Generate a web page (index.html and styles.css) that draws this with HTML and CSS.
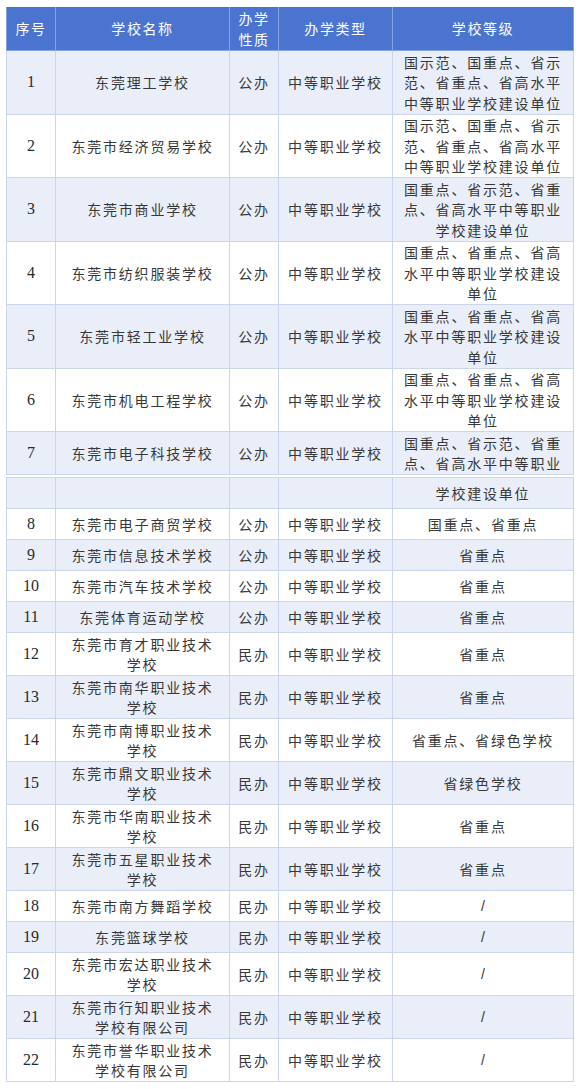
FILE: index.html
```html
<!DOCTYPE html>
<html lang="zh-CN">
<head>
<meta charset="utf-8">
<title>东莞市中等职业学校</title>
<link rel="stylesheet" href="styles.css">
</head>
<body>
<div class="sheet">
  <table class="grid">
    <colgroup>
      <col class="c-no"><col class="c-name"><col class="c-nat"><col class="c-type"><col class="c-lvl">
    </colgroup>
    <thead>
      <tr class="head">
        <th>序号</th><th>学校名称</th><th>办学性质</th><th>办学类型</th><th>学校等级</th>
      </tr>
    </thead>
    <tbody>
      <tr class="alt r3"><td class="no">1</td><td>东莞理工学校</td><td>公办</td><td>中等职业学校</td><td>国示范、国重点、省示范、省重点、省高水平中等职业学校建设单位</td></tr>
      <tr class="r3"><td class="no">2</td><td>东莞市经济贸易学校</td><td>公办</td><td>中等职业学校</td><td>国示范、国重点、省示范、省重点、省高水平中等职业学校建设单位</td></tr>
      <tr class="alt r3"><td class="no">3</td><td>东莞市商业学校</td><td>公办</td><td>中等职业学校</td><td>国重点、省示范、省重点、省高水平中等职业学校建设单位</td></tr>
      <tr class="r3"><td class="no">4</td><td>东莞市纺织服装学校</td><td>公办</td><td>中等职业学校</td><td>国重点、省重点、省高水平中等职业学校建设单位</td></tr>
      <tr class="alt r3"><td class="no">5</td><td>东莞市轻工业学校</td><td>公办</td><td>中等职业学校</td><td>国重点、省重点、省高水平中等职业学校建设单位</td></tr>
      <tr class="r3"><td class="no">6</td><td>东莞市机电工程学校</td><td>公办</td><td>中等职业学校</td><td>国重点、省重点、省高水平中等职业学校建设单位</td></tr>
      <tr class="alt r2"><td class="no">7</td><td>东莞市电子科技学校</td><td>公办</td><td>中等职业学校</td><td>国重点、省示范、省重点、省高水平中等职业</td></tr>
    </tbody>
  </table>
  <table class="grid">
    <colgroup>
      <col class="c-no"><col class="c-name"><col class="c-nat"><col class="c-type"><col class="c-lvl">
    </colgroup>
    <tbody>
      <tr class="alt r1"><td class="no"></td><td></td><td></td><td></td><td>学校建设单位</td></tr>
      <tr class="r1"><td class="no">8</td><td>东莞市电子商贸学校</td><td>公办</td><td>中等职业学校</td><td>国重点、省重点</td></tr>
      <tr class="alt r1"><td class="no">9</td><td>东莞市信息技术学校</td><td>公办</td><td>中等职业学校</td><td>省重点</td></tr>
      <tr class="r1"><td class="no">10</td><td>东莞市汽车技术学校</td><td>公办</td><td>中等职业学校</td><td>省重点</td></tr>
      <tr class="alt r1"><td class="no">11</td><td>东莞体育运动学校</td><td>公办</td><td>中等职业学校</td><td>省重点</td></tr>
      <tr class="r2"><td class="no">12</td><td>东莞市育才职业技术学校</td><td>民办</td><td>中等职业学校</td><td>省重点</td></tr>
      <tr class="alt r2"><td class="no">13</td><td>东莞市南华职业技术学校</td><td>民办</td><td>中等职业学校</td><td>省重点</td></tr>
      <tr class="r2"><td class="no">14</td><td>东莞市南博职业技术学校</td><td>民办</td><td>中等职业学校</td><td>省重点、省绿色学校</td></tr>
      <tr class="alt r2"><td class="no">15</td><td>东莞市鼎文职业技术学校</td><td>民办</td><td>中等职业学校</td><td>省绿色学校</td></tr>
      <tr class="r2"><td class="no">16</td><td>东莞市华南职业技术学校</td><td>民办</td><td>中等职业学校</td><td>省重点</td></tr>
      <tr class="alt r2"><td class="no">17</td><td>东莞市五星职业技术学校</td><td>民办</td><td>中等职业学校</td><td>省重点</td></tr>
      <tr class="r1"><td class="no">18</td><td>东莞市南方舞蹈学校</td><td>民办</td><td>中等职业学校</td><td class="slash">/</td></tr>
      <tr class="alt r1"><td class="no">19</td><td>东莞篮球学校</td><td>民办</td><td>中等职业学校</td><td class="slash">/</td></tr>
      <tr class="r2"><td class="no">20</td><td>东莞市宏达职业技术学校</td><td>民办</td><td>中等职业学校</td><td class="slash">/</td></tr>
      <tr class="alt r2"><td class="no">21</td><td>东莞市行知职业技术学校有限公司</td><td>民办</td><td>中等职业学校</td><td class="slash">/</td></tr>
      <tr class="r2"><td class="no">22</td><td>东莞市誉华职业技术学校有限公司</td><td>民办</td><td>中等职业学校</td><td class="slash">/</td></tr>
    </tbody>
  </table>
</div>
</body>
</html>
```

FILE: styles.css
```css
html, body {
  margin: 0;
  padding: 0;
  background: #ffffff;
}

body {
  font-family: "Noto Sans CJK SC", "Noto Sans", sans-serif;
  color: #3a3a3a;
}

.sheet {
  display: flex;
  flex-direction: column;
  gap: 2px;
  padding: 7px 0 0 6px;
  width: 567px;
}

.grid {
  width: 567px;
  table-layout: fixed;
  border-collapse: collapse;
  border-left: 1px solid #a9bbe0;
  border-right: 1px solid #a9bbe0;
  border-bottom: 1px solid #c3cfe8;
}

.c-no { width: 49px; }
.c-name { width: 174px; }
.c-nat { width: 49px; }
.c-type { width: 114px; }
.c-lvl { width: 181px; }

.head th {
  background: #4b74d0;
  color: #ffffff;
  font-weight: 400;
  font-size: 14px;
  letter-spacing: 1.6px;
  line-height: 21px;
  height: 43px;
  padding: 0 4px;
  border: 1px solid #86a2e0;
  border-top: none;
  text-align: center;
  vertical-align: middle;
}

.grid td {
  border: 1px solid #cbd6ec;
  font-size: 14px;
  letter-spacing: 1.8px;
  line-height: 20.5px;
  padding: 0 12px;
  text-align: center;
  vertical-align: middle;
  color: #383838;
}

.grid td:nth-child(5) {
  padding: 0 10px;
}

.grid td:nth-child(3) {
  padding: 0 4px;
}

.grid td:nth-child(4) {
  padding: 0 2px;
}

.grid td.no {
  font-family: "Liberation Serif", "Times New Roman", serif;
  font-size: 16px;
  letter-spacing: 0;
  padding: 0;
  color: #2a2a2a;
}

.grid td.slash {
  font-family: "Liberation Sans", sans-serif;
  letter-spacing: 0;
}

.alt td {
  background: #e9eef9;
}

.r1 { height: 31px; }
.r2 { height: 43px; }
.r3 { height: 63.5px; }
```
